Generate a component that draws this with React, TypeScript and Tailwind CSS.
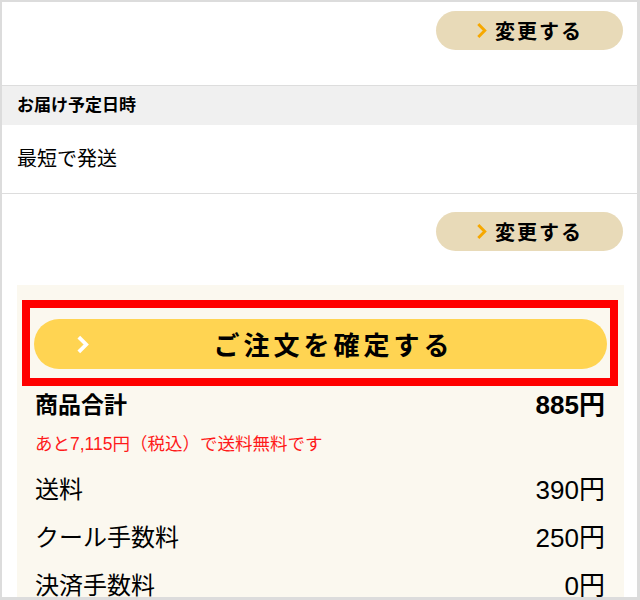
import React from "react";

const font = { fontFamily: '"Liberation Sans", "Noto Sans CJK JP", sans-serif' };

function Chevron({ className, w }: { className: string; w: number }) {
  return (
    <svg viewBox="0 0 12 18" className={className} fill="none">
      <polyline points="2.5,2 9.5,9 2.5,16" stroke="currentColor" strokeWidth={w} strokeLinejoin="miter" strokeLinecap="butt" />
    </svg>
  );
}

function ChangeButton() {
  return (
    <div className="flex justify-end mr-[14px]">
      <button className="w-[187px] h-[39px] rounded-full bg-[#e8dab8] flex items-center justify-center gap-[8px]">
        <Chevron className="w-[11px] h-[17px] text-[#f6a800]" w={3.2} />
        <span className="text-[20px] font-bold text-black tracking-[2px] leading-none" style={{ fontFamily: '"Noto Sans CJK JP", sans-serif' }}>
          変更する
        </span>
      </button>
    </div>
  );
}

function Row({ label, value, h, bold }: { label: string; value: string; h: string; bold?: boolean }) {
  return (
    <div className={`flex items-center justify-between pl-[18px] pr-[19px] ${h}`}>
      <span className={`leading-none text-black ${bold ? "font-bold text-[23px]" : "text-[24px]"}`}>{label}</span>
      <span className={`text-[26px] leading-none text-black ${bold ? "font-bold" : ""}`}>{value}</span>
    </div>
  );
}

export default function App() {
  return (
    <div className="w-[640px] h-[600px] overflow-hidden bg-white border-[#dcdcdc] border-t-2 border-l-2 border-r-[3px] border-b-[3px]" style={font}>
      <div className="pt-[9px] pb-[35px] border-b border-[#dddddd]">
        <ChangeButton />
      </div>
      <div className="h-[39px] bg-[#f0f0f0] flex items-center pl-[15px]">
        <span className="text-[17px] font-bold text-black leading-none">お届け予定日時</span>
      </div>
      <div className="h-[69px] flex items-center pl-[15px] border-b border-[#dddddd]">
        <span className="text-[20px] text-black leading-none">最短で発送</span>
      </div>
      <div className="pt-[18px] pb-[34px]">
        <ChangeButton />
      </div>
      <div className="ml-[15px] mr-[13px] bg-[#fbf8ef] pt-[15px] pb-[20px]">
        <div className="ml-[5px] mr-[6px] border-[8px] border-[#ff0000] pt-[11px] pb-[9px] pl-[4px] pr-[3px]">
          <button className="relative w-full h-[50px] rounded-full bg-[#ffd452] flex items-center justify-center">
            <Chevron className="absolute left-[42px] top-[16px] w-[13px] h-[19px] text-white" w={3.6} />
            <span className="pl-[26px] text-[26px] font-bold text-black tracking-[4px] leading-none" style={{ fontFamily: '"Noto Sans CJK JP", sans-serif' }}>
              ご注文を確定する
            </span>
          </button>
        </div>
        <Row label="商品合計" value="885円" h="h-[38px]" bold />
        <div className="h-[42px] flex items-center pl-[18px]">
          <span className="text-[17.5px] leading-none text-[#ff1a1a]">あと7,115円（税込）で送料無料です</span>
        </div>
        <Row label="送料" value="390円" h="h-[48px]" />
        <Row label="クール手数料" value="250円" h="h-[48px]" />
        <Row label="決済手数料" value="0円" h="h-[48px]" />
      </div>
    </div>
  );
}
